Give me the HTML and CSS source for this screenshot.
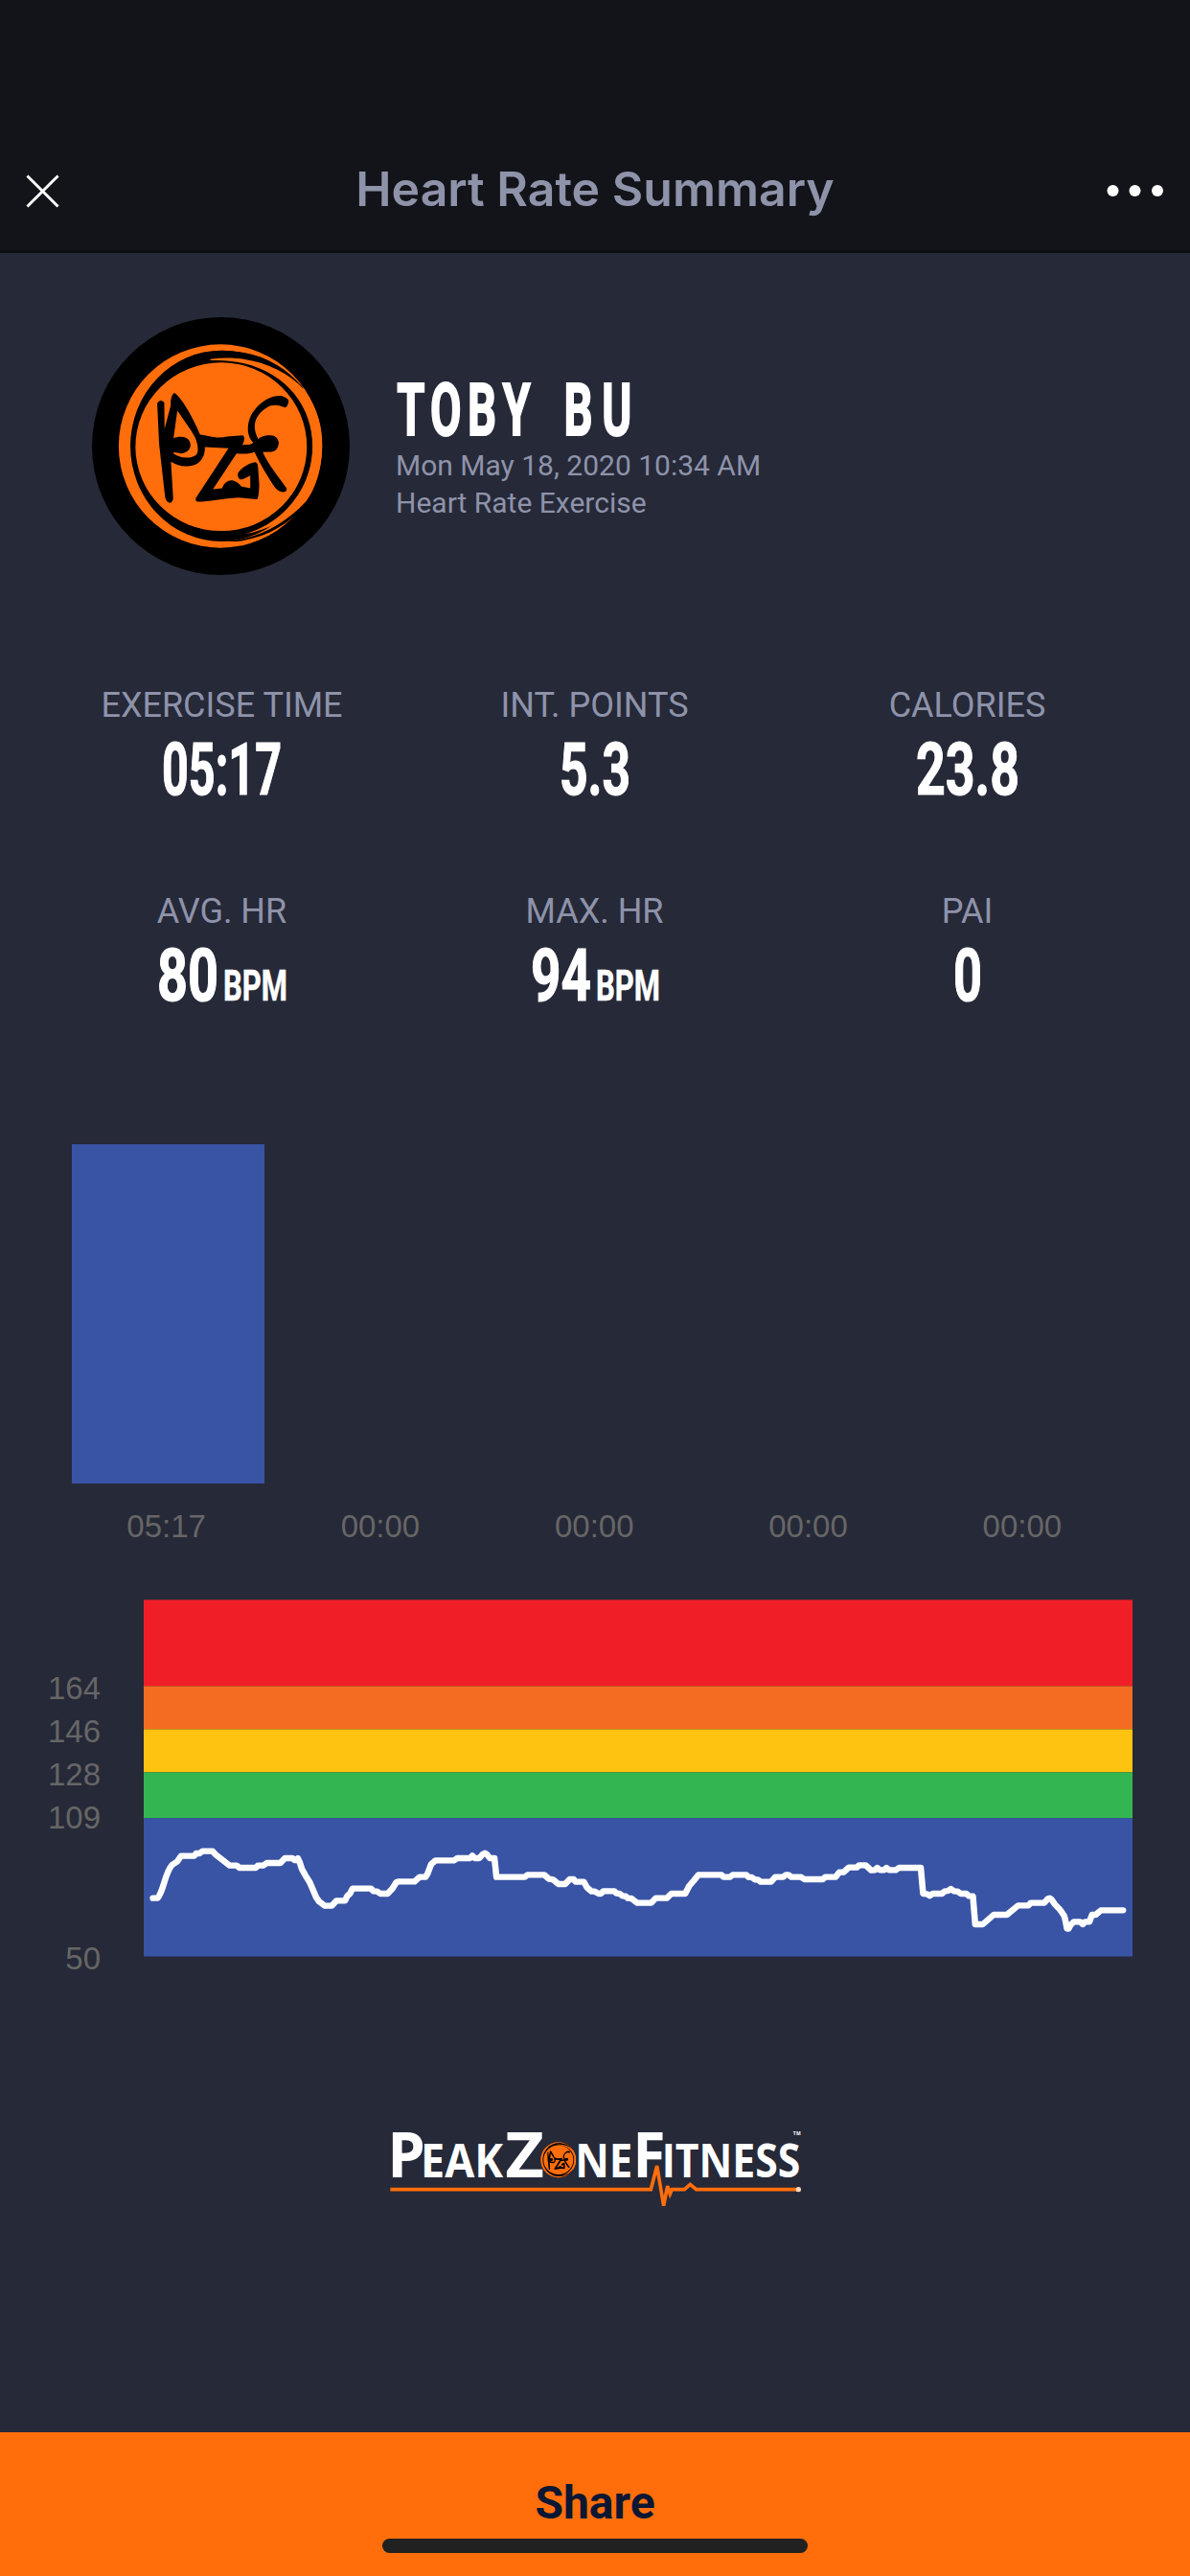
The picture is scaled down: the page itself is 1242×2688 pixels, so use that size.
FILE: index.html
```html
<!doctype html>
<html lang="en">
  <head>
    <meta charset="UTF-8" />
    <meta name="viewport" content="width=device-width, initial-scale=1.0" />
    <title>Heart Rate Summary</title>
    <link rel="stylesheet" href="styles.css">
  </head>
  <body>
    <header class="header">
      <svg class="close-icon" viewBox="0 0 36 36">
        <path d="M1.5 1.5L34.5 34.5M34.5 1.5L1.5 34.5" />
      </svg>
      <h1 class="title">Heart Rate Summary</h1>
      <svg class="more-icon" viewBox="0 0 60 12">
        <circle cx="6.5" cy="6" r="6" />
        <circle cx="29.5" cy="6" r="6" />
        <circle cx="53" cy="6" r="6" />
      </svg>
    </header>

    <section class="profile">
      <svg class="avatar" viewBox="48 63 806 806">
        <circle cx="451" cy="466" r="403" />
        <g id="badge">
          <circle class="orange" cx="449.5" cy="466" r="318" />
          <ellipse cx="453" cy="465.5" rx="285" ry="298.5" />
          <!-- brush strokes of the ring -->
          <path d="M450 167C570 168 645 212 706 280L712 296C640 220 560 190 450 190Z" />
          <path d="M450 764C560 762 650 712 716 640L712 655C660 712 590 755 500 764Z" />
          <path class="orange" d="M418 194C530 178 645 215 712 290C755 350 768 405 768 466L738 466C738 320 620 190 418 198Z" />
          <path class="orange" d="M524 741C640 712 738 600 738 466L768 466C767 530 752 590 718 638C665 695 600 728 524 741Z" />
          <ellipse class="orange" cx="452" cy="468" rx="268" ry="263.5" />
          <!-- figures -->
          <path fill-rule="evenodd" d="M252 332Q262 317 274 330L275 412L294 340Q293 308 305 300C325 310 362 372 386 430C400 431 440 445 470 436L520 432Q530 440 518 463C530 460 545 465 552 455C532 435 532 400 543 375C560 340 600 305 640 309Q668 318 662 330Q658 350 648 344C615 330 595 340 572 365C550 390 555 420 568 444C580 430 610 430 620 435Q633 445 632 458Q630 480 610 484L582 485C600 525 630 560 656 597Q660 608 645 610Q630 608 620 595C600 565 575 525 556 484C540 492 520 490 500 489L426 601L455 598C460 580 475 572 485 573C500 575 510 585 515 592L543 598L543 558C530 564 520 572 510 570Q500 560 506 548C525 525 545 518 560 516Q567 520 567 530L571 585Q570 630 564 632L505 627C460 630 410 640 378 640Q368 636 375 625L475 473L401 469C402 490 395 510 375 522C350 533 320 532 295 515L302 630Q298 645 290 643Q278 640 276 620L258 460ZM315 355L303 441C320 434 345 434 353 450C362 470 350 485 328 489C315 488 305 483 301 488C320 505 360 507 375 492C382 480 380 465 371 440C355 410 335 385 315 355Z" />
        </g>
      </svg>
      <div class="profile-info">
        <svg class="name" viewBox="0 0 260 60">
          <text transform="scale(0.62 1)" x="2 58 121 180 283 347" y="60">TOBYBU</text>
        </svg>
        <p>Mon May 18, 2020 10:34 AM</p>
        <p>Heart Rate Exercise</p>
      </div>
    </section>

    <section class="stats">
      <div class="stat">
        <p class="stat-label">EXERCISE TIME</p>
        <svg class="stat-value" viewBox="0 0 240 60">
          <text x="57" y="60" textLength="125" lengthAdjust="spacingAndGlyphs">05:17</text>
        </svg>
      </div>
      <div class="stat">
        <p class="stat-label">INT. POINTS</p>
        <svg class="stat-value" viewBox="0 0 240 60">
          <text x="83" y="60" textLength="74" lengthAdjust="spacingAndGlyphs">5.3</text>
        </svg>
      </div>
      <div class="stat">
        <p class="stat-label">CALORIES</p>
        <svg class="stat-value" viewBox="0 0 240 60">
          <text x="66" y="60" textLength="108" lengthAdjust="spacingAndGlyphs">23.8</text>
        </svg>
      </div>
      <div class="stat">
        <p class="stat-label">AVG. HR</p>
        <svg class="stat-value" viewBox="0 0 240 60">
          <text x="52" y="60" textLength="64" lengthAdjust="spacingAndGlyphs">80</text>
          <text class="unit" x="121" y="60" textLength="67" lengthAdjust="spacingAndGlyphs">BPM</text>
        </svg>
      </div>
      <div class="stat">
        <p class="stat-label">MAX. HR</p>
        <svg class="stat-value" viewBox="0 0 240 60">
          <text x="53" y="60" textLength="63" lengthAdjust="spacingAndGlyphs">94</text>
          <text class="unit" x="121" y="60" textLength="67" lengthAdjust="spacingAndGlyphs">BPM</text>
        </svg>
      </div>
      <div class="stat">
        <p class="stat-label">PAI</p>
        <svg class="stat-value" viewBox="0 0 240 60">
          <text x="105" y="60" textLength="30" lengthAdjust="spacingAndGlyphs">0</text>
        </svg>
      </div>
    </section>

    <section class="bars">
      <div class="bar"></div>
      <div class="bar-labels">
        <span>05:17</span>
        <span>00:00</span>
        <span>00:00</span>
        <span>00:00</span>
        <span>00:00</span>
      </div>
    </section>

    <section class="zones">
      <div class="axis">
        <span>164</span>
        <span>146</span>
        <span>128</span>
        <span>109</span>
        <span class="axis-min">50</span>
      </div>
      <svg class="plot" viewBox="0 0 1032 373">
        <rect y="0.4" width="1032" height="90" fill="#f01f27" />
        <rect y="90.4" width="1032" height="45" fill="#f36c21" />
        <rect y="135.4" width="1032" height="45" fill="#fec310" />
        <rect y="180.4" width="1032" height="48" fill="#33b552" />
        <rect y="228.2" width="1032" height="144.3" fill="#3954a5" />
        <path class="hr-line" transform="translate(-10 211) scale(0.34439 0.33333)" d="M57 302L71 302C90 280 92 225 115 198L131 187L142 170L182 170L188 162L198 162L207 155L238 155L247 166L290 200L311 200L319 207L369 207L375 200L391 200L402 192L443 192L457 177L480 177L486 183L492 183L496 177L502 190L508 210L518 229L532 252L552 300L561 313L578 326L599 326L613 310L639 310L646 295L654 288L662 272L718 272L725 280L736 281L746 288L768 288L782 273L795 252L802 250L850 250L865 236L883 236L889 226L900 196L913 184L970 184L979 177L1018 177L1025 169L1032 177L1046 177L1056 165L1063 161L1070 166L1078 177L1092 177L1098 236L1184 236L1192 229L1243 229L1257 242L1270 244L1286 258L1306 258L1320 243L1332 243L1338 251L1363 251L1372 268L1386 281L1396 281L1408 288L1415 288L1422 280L1455 280L1462 287L1471 288L1480 295L1490 296L1496 302L1507 303L1525 317L1567 317L1581 302L1614 302L1628 288L1670 288L1682 264L1697 246L1710 229L1780 229L1786 236L1806 236L1814 229L1855 229L1862 236L1872 237L1882 244L1890 244L1899 251L1930 251L1943 236L1967 236L1975 229L1983 229L1992 236L2021 236L2031 243L2087 243L2094 236L2126 236L2137 221L2150 221L2166 206L2190 206L2197 199L2217 199L2234 215L2245 214L2252 207L2260 214L2273 214L2280 207L2288 214L2308 214L2318 207L2384 207L2391 288L2403 289L2411 295L2420 288L2448 288L2456 281L2467 279L2475 273L2484 280L2495 281L2505 288L2522 288L2529 295L2542 296L2549 384L2572 384L2605 354L2645 354L2679 325L2710 325L2717 317L2758 317L2769 304L2775 302L2780 306L2791 322L2805 337L2818 356L2822 370L2827 397L2832 398L2838 386L2848 376L2867 376L2875 384L2882 376L2895 376L2903 354L2914 354L2930 340L2997 340" />
      </svg>
    </section>

    <svg class="logo" viewBox="0 0 1380 360">
      <g class="logo-text">
        <text class="cap" x="43" y="215" textLength="119" lengthAdjust="spacingAndGlyphs">P</text>
        <text x="147" y="215" textLength="258" lengthAdjust="spacingAndGlyphs">EAK</text>
        <text class="cap" x="412" y="215" textLength="122" lengthAdjust="spacingAndGlyphs">Z</text>
        <text x="631" y="215" textLength="180" lengthAdjust="spacingAndGlyphs">NE</text>
        <text class="cap" x="811" y="215" textLength="103" lengthAdjust="spacingAndGlyphs">F</text>
        <text x="902" y="215" textLength="434" lengthAdjust="spacingAndGlyphs">ITNESS</text>
        <text class="tm" x="1313" y="84" textLength="24">TM</text>
      </g>
      <use href="#badge" transform="translate(499.8 80) scale(0.174)" />
      <path class="pulse" d="M52 254H868L887 180L908 305L920 243L928 268L934 254H973L991 238L1010 254H1328" />
      <circle cx="1330" cy="254" r="8" fill="#ffd9c0" />
    </svg>

    <footer class="share">
      <span>Share</span>
      <div class="home-indicator"></div>
    </footer>
  </body>
</html>
```

FILE: styles.css
```css
* {
  margin: 0;
  padding: 0;
  box-sizing: border-box;
}
body {
  display: flex;
  flex-direction: column;
  width: 1242px;
  height: 2688px;
  background-color: #262938;
  color: #8e93aa;
  font-family: Roboto, sans-serif;
  overflow: hidden;
}
svg {
  display: block;
  flex-shrink: 0;
  overflow: visible;
}
.header {
  display: flex;
  align-items: center;
  justify-content: space-between;
  height: 264px;
  padding: 137px 27px 0 27px;
  background-color: #131419;
  border-bottom: 3px solid #0d0e12;
}
.close-icon {
  width: 35px;
  height: 35px;
  stroke: #fff;
  stroke-width: 3;
}
.title {
  font-family: Inter, sans-serif;
  font-size: 50px;
  font-weight: 600;
  line-height: 60px;
  margin-top: -5px;
  margin-left: 25px;
}
.more-icon {
  width: 60px;
  height: 12px;
  fill: #fff;
}
.profile {
  display: flex;
  gap: 48px;
  padding: 67px 0 0 96px;
}
.avatar {
  width: 269px;
  height: 269px;
}
.orange {
  fill: #ff6e0b;
}
.profile-info {
  padding-top: 63px;
  font-size: 30px;
  line-height: 39px;
}
.name {
  width: 260px;
  height: 60px;
  margin-bottom: 12px;
}
.name text,
.stat-value text {
  fill: #fff;
  stroke: #fff;
  stroke-width: 1.2;
  font-size: 76px;
  font-weight: 700;
}
.name text {
  stroke-width: 2;
}
.stats {
  display: grid;
  grid-template-columns: repeat(3, 389px);
  row-gap: 101px;
  padding: 0 37px;
  margin-top: 115px;
}
.stat {
  display: flex;
  flex-direction: column;
  align-items: center;
}
.stat-label {
  font-size: 36px;
  line-height: 42px;
}
.stat-value {
  width: 240px;
  height: 60px;
  margin-top: 12px;
}
.stat-value .unit {
  font-size: 45px;
  stroke-width: 0.6;
}
.bars {
  margin-top: 150px;
  color: #666;
  font-family: "Liberation Sans", sans-serif;
  font-size: 33px;
}
.bar {
  width: 201px;
  height: 354px;
  margin-left: 75px;
  background-color: #3954a5;
}
.bar-labels {
  display: flex;
  margin: 25px 0 0 62px;
  line-height: 40px;
}
.bar-labels span {
  width: 223.3px;
  text-align: center;
}
.zones {
  display: flex;
  gap: 45px;
  height: 373px;
  margin-top: 56px;
}
.axis {
  display: flex;
  flex-direction: column;
  width: 105px;
  padding-top: 70px;
  color: #666;
  font-family: "Liberation Sans", sans-serif;
  font-size: 33px;
  line-height: 45px;
  text-align: right;
}
.axis-min {
  margin-top: 102px;
}
.plot {
  width: 1032px;
  height: 373px;
}
.hr-line {
  fill: none;
  stroke: #fff;
  stroke-width: 19;
  stroke-linecap: round;
  stroke-linejoin: round;
}
.logo {
  width: 460px;
  height: 120px;
  margin: 158px 0 0 390px;
}
.logo-text {
  fill: #fff;
  font-family: "Open Sans", sans-serif;
  font-size: 147px;
  font-weight: 700;
}
.logo-text .cap {
  font-size: 197px;
}
.logo-text .tm {
  font-size: 15px;
}
.pulse {
  fill: none;
  stroke: #ff6e0b;
  stroke-width: 11;
}
.share {
  position: relative;
  height: 150px;
  margin-top: auto;
  background-color: #ff6e0b;
  color: #0b1733;
  font-size: 48px;
  font-weight: 700;
  line-height: 147px;
  text-align: center;
}
.home-indicator {
  position: absolute;
  left: 399px;
  bottom: 24px;
  width: 444px;
  height: 15px;
  border-radius: 8px;
  background-color: #212121;
}
```
